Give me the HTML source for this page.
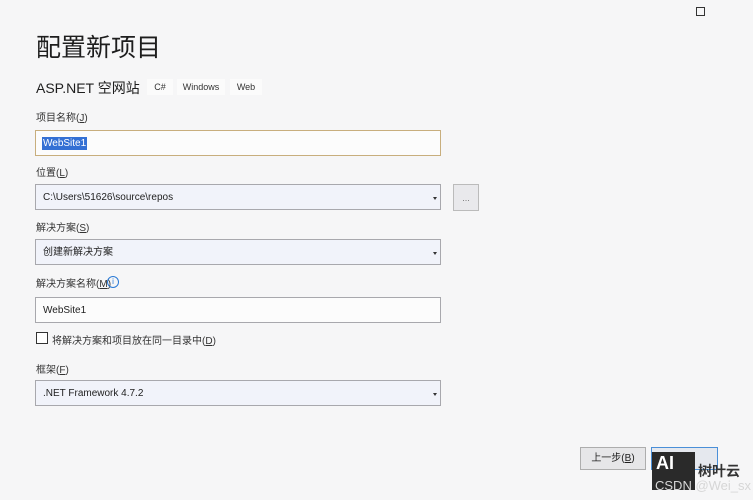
<!DOCTYPE html>
<html><head><meta charset="utf-8"><style>
body{margin:0;width:753px;height:500px;background:#f6f6f7;font-family:"Liberation Sans","Noto Sans CJK SC",sans-serif;color:#1e1e1e;position:relative;overflow:hidden}
.a{position:absolute}
.lbl{position:absolute;left:36px;font-size:10px;color:#333}
.box{position:absolute;left:35px;width:404px;height:24px;border:1px solid #a8a8ad;background:#f1f3fa;font-size:10px;line-height:24px;box-sizing:content-box}
.box span{position:absolute;left:7px;top:1px;line-height:24px}
.box i{position:absolute;right:3px;top:12px;width:0;height:0;border-left:2px solid transparent;border-right:2px solid transparent;border-top:3px solid #333}
.tag{position:absolute;top:79px;height:16px;line-height:16px;font-size:9px;background:#fbfbfb;text-align:center;color:#333}
.btn{position:absolute;top:447px;height:21px;border:1px solid #adadad;background:#e6e6e8;font-size:10px;line-height:21px;text-align:center}
</style></head><body>
<div class="a" style="left:696px;top:7px;width:7px;height:7px;border:1px solid #333"></div>
<div class="a" style="left:36px;top:28px;font-size:25px;font-family:'Noto Sans CJK SC',sans-serif">配置新项目</div>
<div class="a" style="left:36px;top:78px;font-size:14px;font-family:'Liberation Sans','Noto Sans CJK SC',sans-serif">ASP.NET 空网站</div>
<div class="tag" style="left:147px;width:26px">C#</div>
<div class="tag" style="left:177px;width:48px">Windows</div>
<div class="tag" style="left:230px;width:32px">Web</div>
<div class="lbl" style="top:109px">项目名称(<u>J</u>)</div>
<div class="box" style="top:130px;background:#fcfcfc;border-color:#c8ae7d"><span style="top:6px;line-height:13px;background:#3470d4;color:#fff;padding:0 1px;left:6px">WebSite1</span></div>
<div class="lbl" style="top:164px">位置(<u>L</u>)</div>
<div class="box" style="top:184px"><span>C:\Users\51626\source\repos</span><i></i></div>
<div class="a" style="left:453px;top:184px;width:24px;height:25px;border:1px solid #bbb;background:#e9e9ec;font-size:8px;text-align:center;line-height:28px;color:#555">…</div>
<div class="lbl" style="top:219px">解决方案(<u>S</u>)</div>
<div class="box" style="top:239px"><span>创建新解决方案</span><i></i></div>
<div class="lbl" style="top:275px">解决方案名称(<u>M</u>)</div>
<div class="a" style="left:107px;top:276px;width:10px;height:10px;border:1px solid #2a7ad6;border-radius:50%;font-size:8px;line-height:10px;text-align:center;color:#2a7ad6">i</div>
<div class="box" style="top:297px;background:#fcfcfc"><span>WebSite1</span></div>
<div class="a" style="left:36px;top:332px;width:10px;height:10px;border:1px solid #333;background:#fff"></div>
<div class="lbl" style="left:52px;top:332px">将解决方案和项目放在同一目录中(<u>D</u>)</div>
<div class="lbl" style="top:361px">框架(<u>F</u>)</div>
<div class="box" style="top:380px"><span>.NET Framework 4.7.2</span><i></i></div>
<div class="btn" style="left:580px;width:64px">上一步(<u>B</u>)</div>
<div class="btn" style="left:651px;width:65px;border-color:#4a8fd8;background:#e5e8ee"></div>
<div class="a" style="left:652px;top:452px;width:43px;height:38px;background:#2a2a2a"></div>
<div class="a" style="left:656px;top:453px;font-size:18px;font-weight:bold;color:#fff">AI</div>
<div class="a" style="left:698px;top:461px;font-size:14px;font-weight:bold;color:#333;font-family:'Noto Sans CJK SC',sans-serif">树叶云</div>
<div class="a" style="left:655px;top:478px;font-size:13px;color:#d6d6d6">CSDN @Wei_sx</div>
</body></html>
